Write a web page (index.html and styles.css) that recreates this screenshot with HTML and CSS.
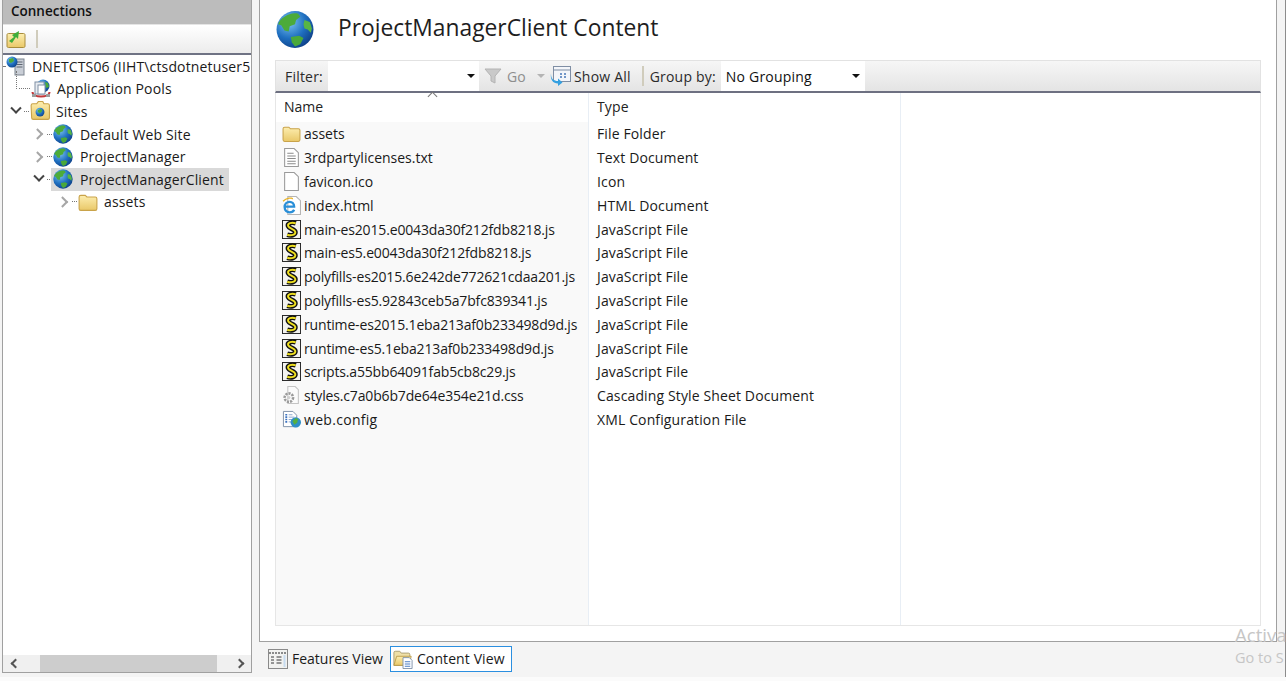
FILE: index.html

```html
<!DOCTYPE html>
<html lang="en">
<head>
    <meta charset="UTF-8">
    <title>ProjectManagerClient Content</title>
    <link rel="stylesheet" href="styles.css">
</head>
<body>

<svg class="defs" width="0" height="0">
    <defs>
        <radialGradient id="sea" cx="0.35" cy="0.3" r="0.8">
            <stop offset="0" stop-color="#7cc4f0"/>
            <stop offset="0.55" stop-color="#1f6fc0"/>
            <stop offset="1" stop-color="#0c3a80"/>
        </radialGradient>
        <linearGradient id="fold" x1="0" y1="0" x2="0" y2="1">
            <stop offset="0" stop-color="#fdeeb0"/>
            <stop offset="1" stop-color="#e9c868"/>
        </linearGradient>
        <symbol id="globe" viewBox="0 0 36 36">
            <circle cx="18" cy="18" r="17.5" fill="url(#sea)"/>
            <path d="M8 6c4-3 9-4 13-3l2 3-4 3-1 4-5 2-1 5-4-1-3-5-3-1c1-3 3-5 6-7z" fill="#4cab3a"/>
            <path d="M27 9l5 2 2 6-1 4-3-3-3-1-1-4z" fill="#58b544"/>
            <path d="M14 25l8-1 4 2-3 6-5 2-3-4z" fill="#4aa83a"/>
        </symbol>
        <symbol id="folder" viewBox="0 0 18 18">
            <path d="M1 4.500c0-1 .5-1.500 1.500-1.500h4l1.500 1.500h7.500c1 0 1.500.5 1.500 1.500v9c0 1-.5 1.500-1.500 1.500h-13c-1 0-1.500-.5-1.500-1.500z" fill="url(#fold)" stroke="#c9a34a"/>
        </symbol>
        <symbol id="doc" viewBox="0 0 18 18">
            <path d="M2.500 .5h9l4 4v13h-13z" fill="#fff" stroke="#9a9a9a"/>
            <path d="M5 5h6M5 7.500h8M5 10h8M5 12.500h8M5 15h8" stroke="#8a8a8a"/>
        </symbol>
        <symbol id="blank" viewBox="0 0 18 18">
            <path d="M2.500 .5h9l4 4v13h-13z" fill="#fff" stroke="#9a9a9a"/>
        </symbol>
        <symbol id="ie" viewBox="0 0 18 18">
            <path d="M5.500 .5h8l4 4v13h-12z" fill="#fff" stroke="#b5b5b5"/>
            <path d="M1.500 10h10c0-3-2-4.500-4.200-4.500C4.500 5.500 2.500 7.500 2.500 10.500s2 5 4.800 5c2 0 3.500-1 4.200-2.500" fill="none" stroke="#2a8fd8" stroke-width="2.200"/>
            <path d="M1 5c3-3 9-4 9-2" fill="none" stroke="#e8b020" stroke-width="1.200"/>
        </symbol>
        <symbol id="script" viewBox="0 0 20 20">
            <rect x=".5" y=".5" width="19" height="19" fill="#f4f4f0" stroke="#222"/>
            <path d="M14.500 3.500C10 2 5.500 3.500 6.500 6.500s7 3 7.500 6-4 4.500-8.500 3" fill="none" stroke="#111" stroke-width="5"/>
            <path d="M14.500 3.500C10 2 5.500 3.500 6.500 6.500s7 3 7.500 6-4 4.500-8.500 3" fill="none" stroke="#efe020" stroke-width="2"/>
        </symbol>
        <symbol id="css" viewBox="0 0 18 18">
            <path d="M5.500 .5h7l3 3v13h-10z" fill="#fbfbfb" stroke="#c4c4c4"/>
            <circle cx="6.500" cy="11" r="4" fill="none" stroke="#9a9a9a" stroke-width="2.400" stroke-dasharray="2 1"/>
            <circle cx="6.500" cy="11" r="1.500" fill="#d0d0d0"/>
        </symbol>
        <symbol id="config" viewBox="0 0 20 18">
            <path d="M1.500 .5h10l4 4v12h-14z" fill="#fff" stroke="#7c8fa8"/>
            <path d="M3.500 4h2M3.500 6.500h2M3.500 9h2M3.500 11.500h2" stroke="#3a72c0" stroke-width="1.600"/>
            <path d="M7 4h4M7 6.500h6M7 9h5M7 11.500h4" stroke="#8aa4cc"/>
            <circle cx="14.500" cy="12" r="5.500" fill="#2f8fc8"/>
            <path d="M11 10.500l3.500-3 2.500 1-1 4-3 2z" fill="#55b040"/>
        </symbol>
        <symbol id="server" viewBox="0 0 20 20">
            <rect x="9" y="3" width="9" height="16" fill="#c9ced6" stroke="#7d8590"/>
            <path d="M10.500 6h6M10.500 8.500h6M10.500 11h6" stroke="#5e6672"/>
            <circle cx="6" cy="6" r="5.500" fill="url(#sea)"/>
            <path d="M3 3l4-1 1 3-3 2-2-1z" fill="#4cab3a"/>
        </symbol>
        <symbol id="pools" viewBox="0 0 20 20">
            <circle cx="12" cy="7" r="6.500" fill="url(#sea)"/>
            <path d="M14 3l3 1 1 4-3 1z" fill="#4cab3a"/>
            <rect x="4" y="3" width="9" height="12" fill="#e9edf2" stroke="#8090a4"/>
            <rect x="7" y="6" width="7" height="9" fill="#fff" stroke="#8090a4"/>
            <path d="M1.500 13c0 6 17 6 17 0" fill="none" stroke="#c2383a" stroke-width="2"/>
            <rect x="1" y="15" width="4" height="3" fill="#9c9c9c"/>
            <rect x="15" y="15" width="4" height="3" fill="#9c9c9c"/>
        </symbol>
        <symbol id="sites" viewBox="0 0 18 18">
            <path d="M1 4c0-1 .5-1.500 1.500-1.500h3.500l1.500-2h4l1 2h3.500c1 0 1.500.5 1.500 1.500v11c0 1-.5 1.500-1.500 1.500h-13c-1 0-1.500-.5-1.500-1.500z" fill="url(#fold)" stroke="#c9a34a"/>
            <circle cx="9" cy="10" r="4" fill="url(#sea)"/>
            <path d="M7 8l3-1 1 2-2 2-2-1z" fill="#4cab3a"/>
        </symbol>
        <symbol id="connect" viewBox="0 0 20 20">
            <path d="M1 6c0-1 .5-1.500 1.500-1.500h15c1 0 1.500.5 1.500 1.500v11c0 1-.5 1.500-1.500 1.500h-15c-1 0-1.500-.5-1.500-1.500z" fill="url(#fold)" stroke="#a88c3c"/>
            <path d="M3 12l5-4-2-2 7-4-1 8-2-2-4 6z" fill="#3fae3a"/>
        </symbol>
        <symbol id="funnel" viewBox="0 0 18 18">
            <path d="M1 2h16l-6 7v7l-4-2v-5z" fill="#c9c9c9" stroke="#b4b4b4"/>
        </symbol>
        <symbol id="showall" viewBox="0 0 22 20">
            <rect x="3.500" y=".5" width="17" height="15" fill="#f4f6fa" stroke="#7f8ea4"/>
            <path d="M3.500 4h17" stroke="#7f8ea4"/>
            <path d="M10 8h2M14 8h2M10 11h2M14 11h2" stroke="#4878b8" stroke-width="1.400"/>
            <path d="M1 8c0 5 3 7 7 7v-2.500l4.500 4-4.500 3.500v-2.500c-5 0-8-4-7-10z" fill="#35a0e0"/>
        </symbol>
        <symbol id="features" viewBox="0 0 20 20">
            <rect x=".5" y=".5" width="19" height="19" fill="#f2f2f0" stroke="#8a8a8a"/>
            <path d="M1 4h18" stroke="#8a8a8a" stroke-width="2" stroke-dasharray="2 1"/>
            <path d="M3 8h3M3 11h3M3 14h3M8.500 8h5M8.500 11h5M8.500 14h5" stroke="#777" stroke-width="1.400"/>
            <path d="M15.500 6h2v12h-2z" fill="#c8dcf0"/>
        </symbol>
        <symbol id="content" viewBox="0 0 22 22">
            <path d="M1 4c0-1 .5-1.500 1.500-1.500h5l1.500 2h8c1 0 1.500.5 1.500 1.500v12h-17.500z" fill="#efe0a8" stroke="#a89a70"/>
            <path d="M1 18l3-10h16l-2 10z" fill="url(#fold)" stroke="#b99a4a"/>
            <path d="M11 9.500h7l3 3v9h-10z" fill="#fff" stroke="#7c8fa8"/>
            <path d="M13 14h6M13 16.500h6M13 19h6" stroke="#3a72c0"/>
        </symbol>
    </defs>
</svg>

<div class="window">
    <aside class="connections">
        <div class="conn-title">Connections</div>
        <div class="conn-tools">
            <svg class="ico"><use href="#connect"/></svg>
            <span class="tool-sep"></span>
        </div>
        <ul class="tree">
            <li class="node level-0"><span class="dots"></span><svg class="ico"><use href="#server"/></svg><span class="clip">DNETCTS06 (IIHT\ctsdotnetuser5</span></li>
            <li class="node level-1 stem"><span class="dots wide"></span><svg class="ico"><use href="#pools"/></svg>Application Pools</li>
            <li class="node level-1"><i class="chev open"></i><span class="dots"></span><svg class="ico"><use href="#sites"/></svg>Sites</li>
            <li class="node level-2"><i class="chev"></i><span class="dots"></span><svg class="ico"><use href="#globe"/></svg>Default Web Site</li>
            <li class="node level-2"><i class="chev"></i><span class="dots"></span><svg class="ico"><use href="#globe"/></svg>ProjectManager</li>
            <li class="node level-2"><i class="chev open"></i><span class="dots"></span><span class="selected"><svg class="ico"><use href="#globe"/></svg>ProjectManagerClient</span></li>
            <li class="node level-3"><i class="chev"></i><span class="dots"></span><svg class="ico"><use href="#folder"/></svg>assets</li>
        </ul>
        <div class="hscroll">
            <i class="arrow left"></i>
            <div class="thumb"></div>
            <i class="arrow right"></i>
        </div>
    </aside>

    <main class="workspace">
        <section class="content-pane">
            <header class="page-head">
                <svg class="head-globe"><use href="#globe"/></svg>
                <h1>ProjectManagerClient Content</h1>
            </header>
            <div class="filterbar">
                <label class="filter-label">Filter:</label>
                <div class="combo filter-combo"><span class="caret"></span></div>
                <svg class="ico funnel"><use href="#funnel"/></svg>
                <span class="go">Go</span>
                <span class="caret faded"></span>
                <svg class="ico showall"><use href="#showall"/></svg>
                <span>Show All</span>
                <span class="tool-sep bar-sep"></span>
                <label>Group by:</label>
                <div class="combo group-combo">No Grouping<span class="caret"></span></div>
            </div>
            <div class="listing">
                <div class="col col-name">
                    <div class="col-head">Name<i class="sort"></i></div>
                    <div class="col-body">
                        <div class="file"><svg class="ico"><use href="#folder"/></svg>assets</div>
                        <div class="file"><svg class="ico"><use href="#doc"/></svg>3rdpartylicenses.txt</div>
                        <div class="file"><svg class="ico"><use href="#blank"/></svg>favicon.ico</div>
                        <div class="file"><svg class="ico"><use href="#ie"/></svg>index.html</div>
                        <div class="file hashed"><svg class="ico"><use href="#script"/></svg>main-es2015.e0043da30f212fdb8218.js</div>
                        <div class="file hashed"><svg class="ico"><use href="#script"/></svg>main-es5.e0043da30f212fdb8218.js</div>
                        <div class="file hashed"><svg class="ico"><use href="#script"/></svg>polyfills-es2015.6e242de772621cdaa201.js</div>
                        <div class="file hashed"><svg class="ico"><use href="#script"/></svg>polyfills-es5.92843ceb5a7bfc839341.js</div>
                        <div class="file hashed"><svg class="ico"><use href="#script"/></svg>runtime-es2015.1eba213af0b233498d9d.js</div>
                        <div class="file hashed"><svg class="ico"><use href="#script"/></svg>runtime-es5.1eba213af0b233498d9d.js</div>
                        <div class="file hashed"><svg class="ico"><use href="#script"/></svg>scripts.a55bb64091fab5cb8c29.js</div>
                        <div class="file hashed"><svg class="ico"><use href="#css"/></svg>styles.c7a0b6b7de64e354e21d.css</div>
                        <div class="file wide-name"><svg class="ico"><use href="#config"/></svg>web.config</div>
                    </div>
                </div>
                <div class="col col-type">
                    <div class="col-head">Type</div>
                    <div class="col-body">
                        <div class="file">File Folder</div>
                        <div class="file">Text Document</div>
                        <div class="file">Icon</div>
                        <div class="file">HTML Document</div>
                        <div class="file">JavaScript File</div>
                        <div class="file">JavaScript File</div>
                        <div class="file">JavaScript File</div>
                        <div class="file">JavaScript File</div>
                        <div class="file">JavaScript File</div>
                        <div class="file">JavaScript File</div>
                        <div class="file">JavaScript File</div>
                        <div class="file">Cascading Style Sheet Document</div>
                        <div class="file">XML Configuration File</div>
                    </div>
                </div>
                <div class="col col-rest"></div>
            </div>
        </section>
        <nav class="view-tabs">
            <div class="tab"><svg class="ico"><use href="#features"/></svg>Features View</div>
            <div class="tab active"><svg class="ico"><use href="#content"/></svg>Content View</div>
        </nav>
    </main>
</div>

<div class="watermark">
    <div class="wm-big">Activa</div>
    <div class="wm-small">Go to S</div>
</div>

</body>
</html>
```

FILE: styles.css

```css
* { box-sizing: border-box; }
html, body { height: 100%; }
body { margin: 0; background-color: #fbfbfb; font-family: "Open Sans", "Noto Sans", Arial, sans-serif; font-size: 14px; color: #1a1a1a; overflow: hidden; }
.defs { position: absolute; }
.window { height: 677px; display: flex; padding: 0 8px 0 2px; background-color: #f4f4f4; border-right: 1px solid #8c8c8c; }
.ico { width: 18px; height: 18px; flex: none; }

/* left pane */
.connections { width: 250px; height: 673px; display: flex; flex-direction: column; background-color: #fff; border: 1px solid #a0a0a0; border-top: 0; }
.conn-title { height: 24px; padding: 2px 0 0 8px; background-color: #bcbcbc; font-weight: 600; font-size: 13.5px; color: #111; }
.conn-tools { height: 31px; display: flex; align-items: center; gap: 10px; padding-left: 3px; background: linear-gradient(#ffffff, #ececec); border-top: 1px solid #e4e4e4; border-bottom: 2px solid #6f7384; }
.conn-tools .ico { width: 20px; height: 20px; }
.tool-sep { width: 2px; height: 18px; background-color: #d0ccbc; }
.tree { list-style: none; margin: 0; padding: 0; flex: 1; overflow: hidden; letter-spacing: .15px; }
.node { position: relative; height: 22.6px; display: flex; align-items: center; white-space: nowrap; }
.node .ico { width: 20px; height: 20px; margin-right: 6px; }
.level-1 { padding-left: 9px; }
.level-2 { padding-left: 32px; }
.level-2 .ico { margin-right: 7px; }
.level-3 { padding-left: 57px; }
.level-1 .dots.wide { width: 11px; margin-left: 7px; }
.level-0 .dots { width: 2px; }
.stem::before { content: ""; position: absolute; left: 13px; top: -7px; height: 18px; border-left: 1px dotted #777; }
.dots { width: 5px; height: 0; border-top: 1px dotted #777; margin-right: 1px; }
.chev { width: 8px; height: 8px; margin-right: 4px; border-right: 2px solid #a6a6a6; border-bottom: 2px solid #a6a6a6; transform: rotate(-45deg) translate(-1px, -1px); flex: none; }
.chev.open { border-color: #444; transform: rotate(45deg) translate(-2px, -2px); }
.clip { overflow: hidden; width: 218px; }
.selected { display: flex; align-items: center; height: 23px; margin-left: -2px; padding: 0 5px 0 2px; background-color: #d9d9d9; }
.hscroll { height: 17px; display: flex; align-items: center; background-color: #f0f0f0; }
.hscroll .thumb { width: 177px; height: 17px; margin-left: 21px; background-color: #cdcdcd; }
.arrow { width: 7px; height: 7px; margin-left: 9px; border-left: 2px solid #555; border-bottom: 2px solid #555; transform: rotate(45deg); flex: none; }
.arrow.right { margin-left: 19px; transform: rotate(225deg); }

/* right pane */
.workspace { flex: 1; margin-left: 7px; display: flex; flex-direction: column; min-width: 0; }
.content-pane { height: 642px; padding: 0 15px 15px 15px; background-color: #fff; border: 1px solid #a0a0a0; border-top: 0; display: flex; flex-direction: column; }
.page-head { height: 60px; display: flex; align-items: center; padding-bottom: 5px; }
.head-globe { width: 38px; height: 39px; margin: 3px 24px 0 1px; }
h1 { margin: 0; font-size: 22.8px; font-weight: 400; color: #1e1e1e; }

.filterbar { height: 33px; display: flex; align-items: center; padding-left: 9px; background: linear-gradient(#f6f6f6, #e4e4e4); border: 1px solid #e2e2e2; border-bottom: 2px solid #6d7081; color: #2a2a2a; white-space: nowrap; letter-spacing: .2px; }
.combo { height: 30px; display: flex; align-items: center; justify-content: space-between; background-color: #fff; }
.filter-combo { width: 151px; margin-left: 5px; padding-right: 4px; justify-content: flex-end; }
.group-combo { width: 144px; margin-left: 5px; padding: 0 5px; color: #111; }
.caret { width: 0; height: 0; border: 4px solid transparent; border-top: 4px solid #111; border-bottom: 0; }
.caret.faded { border-top-color: #b4b4b4; margin: 0 5px 0 11px; }
.funnel { margin: 0 5px; }
.go { color: #8e8e8e; }
.showall { width: 22px; height: 20px; margin-right: 2px; }
.bar-sep { margin: 0 6px 0 11px; height: 20px; }

.listing { flex: 1; display: flex; background-color: #fff; border: 1px solid #e6e6e6; border-top: 0; min-height: 0; }
.col { display: flex; flex-direction: column; border-right: 1px solid #e8eef5; }
.col-name { width: 313px; }
.col-type { width: 312px; letter-spacing: .13px; }
.col-rest { flex: 1; border-right: 0; }
.col-head { height: 29px; padding: 4px 0 0 8px; position: relative; color: #222; }
.sort { position: absolute; left: 153px; top: 0; width: 7px; height: 7px; border-left: 1px solid #777; border-top: 1px solid #777; transform: rotate(45deg); }
.col-body { flex: 1; }
.col-name .col-body { background-color: #f9f9f9; }
.file { height: 23.8px; display: flex; align-items: center; gap: 3px; padding-left: 7px; white-space: nowrap; }
.file.hashed { letter-spacing: -.16px; }
.file.wide-name { letter-spacing: .3px; }
.col-type .file { padding-left: 8px; }
.col-name .file .ico { width: 19px; height: 19px; margin-left: -1px; }

.view-tabs { height: 30px; display: flex; align-items: center; gap: 5px; padding: 3px 0 0 8px; }
.tab { height: 26px; display: flex; align-items: center; gap: 4px; padding: 0 2px 0 1px; color: #1a1a1a; }
.tab .ico { width: 20px; height: 20px; }
.tab.active { background-color: #fff; border: 1px solid #2b8fe0; padding: 0 6px 0 2px; letter-spacing: .1px; }

.watermark { position: absolute; left: 1235px; top: 623px; color: #c6c6c6; white-space: nowrap; }
.wm-big { font-size: 18.6px; line-height: 24px; }
.wm-small { font-size: 14.5px; line-height: 22px; }
```
